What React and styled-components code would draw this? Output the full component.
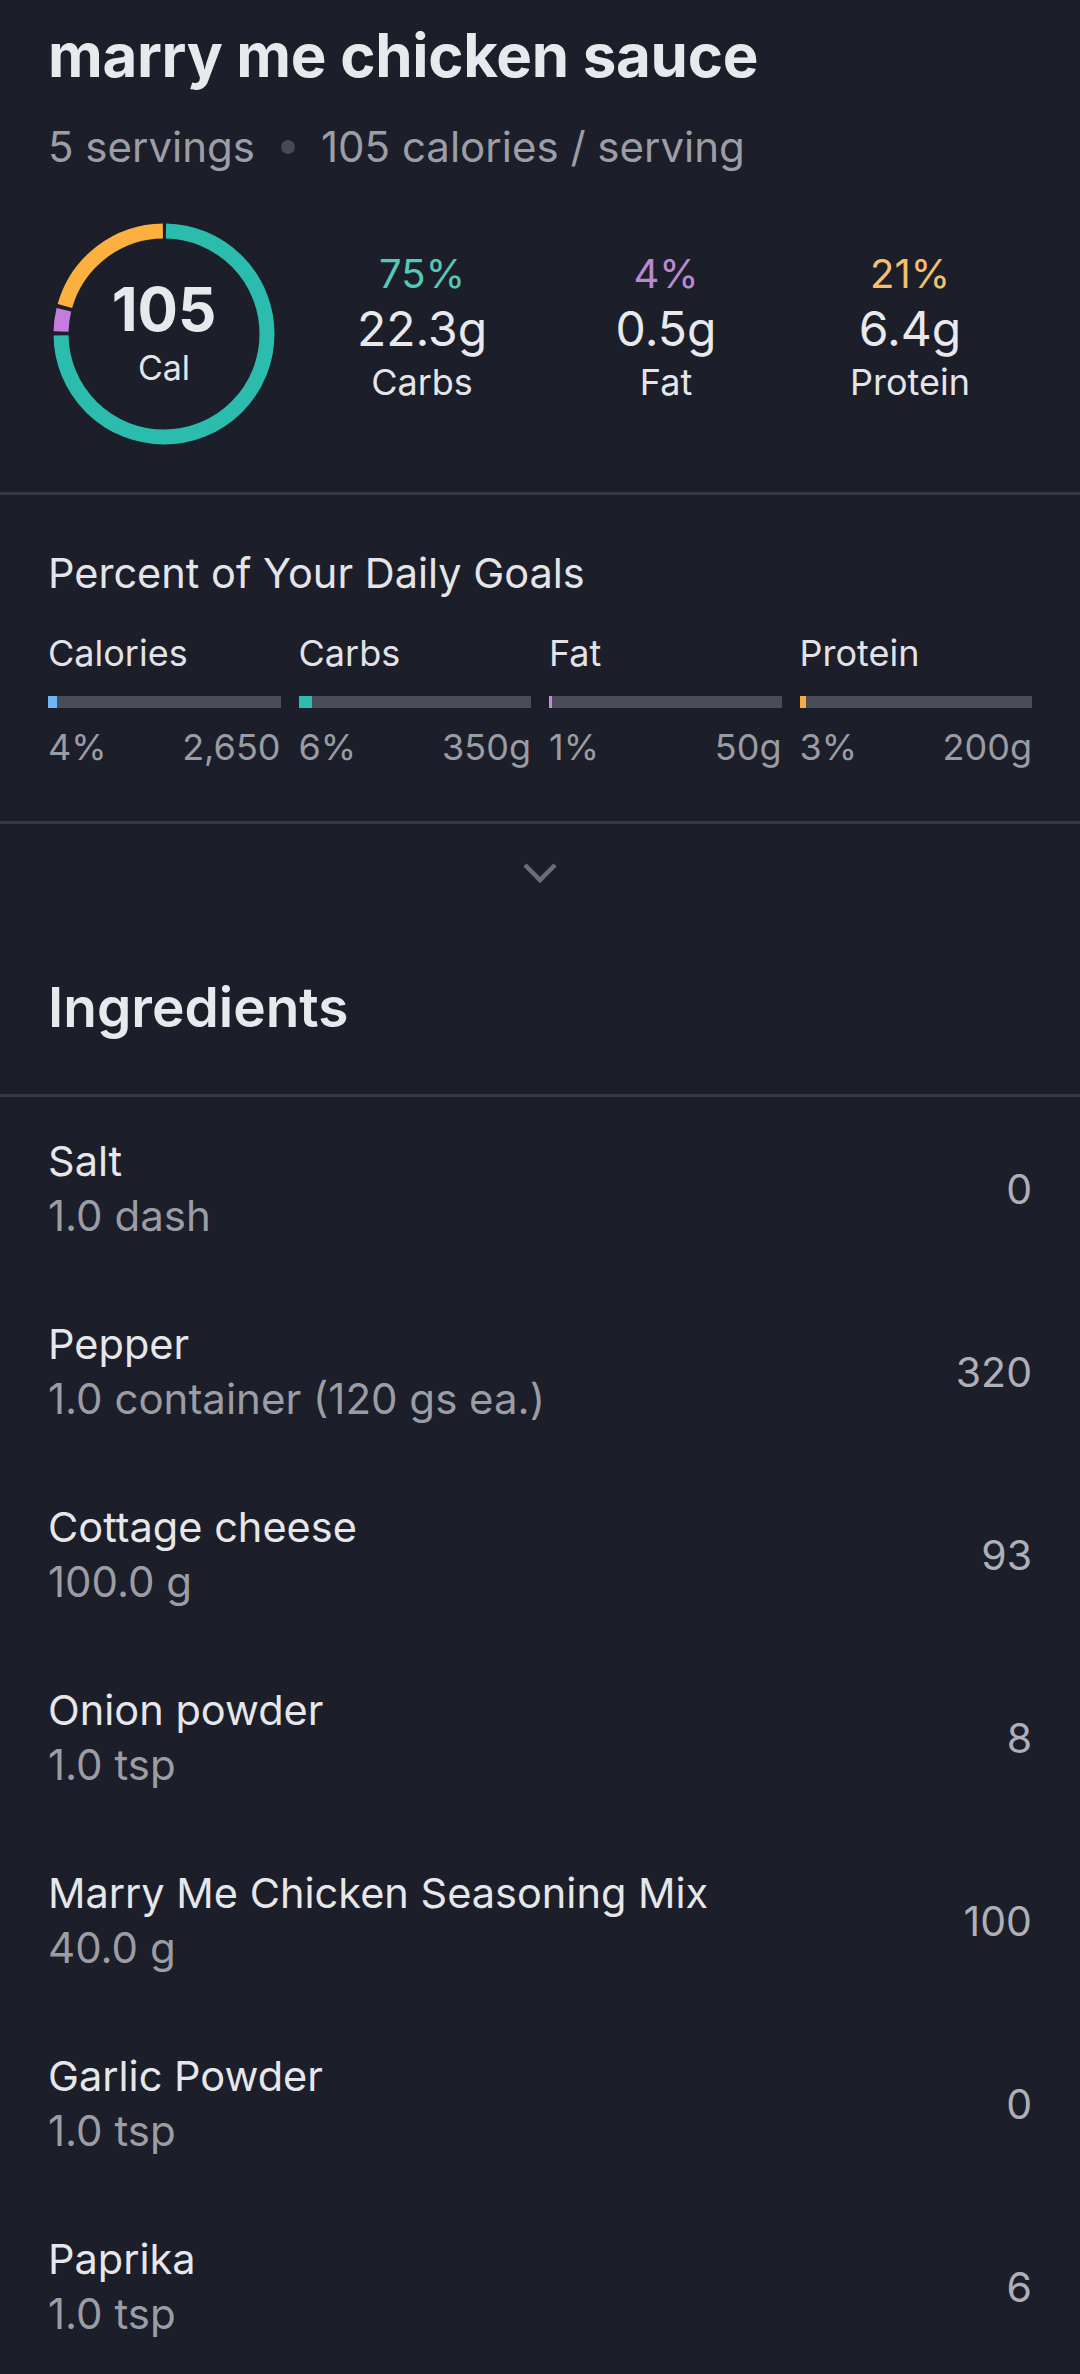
import React from 'react'
import styled, { createGlobalStyle } from 'styled-components'

const GlobalStyle = createGlobalStyle`
  html, body {
    margin: 0;
    padding: 0;
    background: #1c1e29;
  }
  body {
    font-family: Inter, "Noto Sans", sans-serif;
    color: #e6e7ea;
  }
`;

const Page = styled.div`
  width: 1080px;
  min-height: 2374px;
  background: #1c1e29;
  overflow: hidden;
`;

const Header = styled.div`
  padding: 20px 48px 42px;
`;

const Title = styled.h1`
  margin: 0;
  font-size: 60px;
  line-height: 70px;
  font-weight: 700;
  letter-spacing: -0.3px;
  color: #e8e9ec;
`;

const Subtitle = styled.div`
  margin-top: 31px;
  display: flex;
  align-items: center;
  gap: 26px;
  font-size: 42px;
  line-height: 52px;
  color: #9c9ea6;
`;

const Dot = styled.span`
  width: 14px;
  height: 14px;
  border-radius: 50%;
  background: #474a55;
`;

const Summary = styled.div`
  margin-top: 45px;
  display: flex;
  align-items: center;
`;

const RingBox = styled.div`
  position: relative;
  width: 232px;
  height: 232px;
  flex: none;
`;

const RingCenter = styled.div`
  position: absolute;
  inset: 0;
  display: flex;
  flex-direction: column;
  align-items: center;
  justify-content: center;
  gap: 4px;
`;

const RingValue = styled.div`
  font-size: 60px;
  line-height: 64px;
  font-weight: 700;
  color: #e8e9ec;
`;

const RingLabel = styled.div`
  font-size: 34px;
  line-height: 46px;
  color: #e4e5e8;
`;

const Stats = styled.div`
  margin-left: 20px;
  flex: 1;
  display: grid;
  grid-template-columns: repeat(3, 1fr);
  padding-bottom: 14px;
`;

const Stat = styled.div`
  display: flex;
  flex-direction: column;
  align-items: center;
`;

const StatPct = styled.div`
  font-size: 40px;
  line-height: 50px;
  color: ${p => p.color};
`;

const StatValue = styled.div`
  font-size: 48px;
  line-height: 60px;
  color: #e8e9ec;
`;

const StatLabel = styled.div`
  font-size: 36px;
  line-height: 46px;
  color: #e4e5e8;
`;

const Divider = styled.div`
  height: 3px;
  background: #363945;
`;

const Goals = styled.div`
  padding: 54px 48px 52px;
`;

const GoalsTitle = styled.div`
  font-size: 41.5px;
  line-height: 48px;
  color: #e4e5e8;
`;

const GoalsGrid = styled.div`
  margin-top: 34px;
  display: grid;
  grid-template-columns: repeat(4, 1fr);
  column-gap: 18px;
`;

const Goal = styled.div`
  display: flex;
  flex-direction: column;
`;

const GoalLabel = styled.div`
  font-size: 36px;
  line-height: 44px;
  color: #e2e3e7;
`;

const Track = styled.div`
  margin-top: 21px;
  height: 12px;
  background: #4a4c56;
  display: flex;
`;

const Fill = styled.div`
  height: 100%;
  background: ${p => p.color};
`;

const GoalNums = styled.div`
  margin-top: 17px;
  display: flex;
  justify-content: space-between;
  font-size: 36px;
  line-height: 44px;
  color: #9a9ca4;
`;

const Toggle = styled.div`
  display: flex;
  justify-content: center;
  padding-top: 38px;
`;

const SectionHead = styled.h2`
  margin: 0;
  padding: 90px 48px 54px;
  font-size: 55px;
  line-height: 66px;
  font-weight: 600;
  color: #e8e9ec;
`;

const List = styled.div`
  display: flex;
  flex-direction: column;
`;

const Row = styled.div`
  height: 183px;
  box-sizing: border-box;
  padding: 0 48px;
  display: flex;
  align-items: center;
  justify-content: space-between;
  border-radius: 28px;
`;

const RowText = styled.div`
  display: flex;
  flex-direction: column;
`;

const RowName = styled.div`
  font-size: 41.5px;
  line-height: 54px;
  color: #e6e7ea;
`;

const RowQty = styled.div`
  font-size: 42px;
  line-height: 56px;
  color: #9b9da5;
`;

const RowCal = styled.div`
  font-size: 41px;
  line-height: 50px;
  color: #aeb0b7;
`;

const R = 103;
const C = 2 * Math.PI * R;

const Ring = () => {
  const segs = [
    { f: 0.75, color: '#2bbcae' },
    { f: 0.04, color: '#c67bde' },
    { f: 0.21, color: '#fbb03f' },
  ];
  let start = 0;
  const gap = 4;
  return (
    <svg width="232" height="232" viewBox="0 0 232 232">
      <g transform="rotate(-90 116 116)">
        {segs.map((s, i) => {
          const len = s.f * C - gap;
          const el = (
            <circle
              key={i}
              cx="116"
              cy="116"
              r={R}
              fill="none"
              stroke={s.color}
              strokeWidth="15"
              strokeDasharray={`${len} ${C - len}`}
              strokeDashoffset={-(start * C + gap / 2)}
            />
          );
          start += s.f;
          return el;
        })}
      </g>
    </svg>
  );
};

const stats = [
  { pct: '75%', value: '22.3g', label: 'Carbs', color: '#55c8b9' },
  { pct: '4%', value: '0.5g', label: 'Fat', color: '#bb89d1' },
  { pct: '21%', value: '6.4g', label: 'Protein', color: '#f4c06f' },
];

const goals = [
  { label: 'Calories', pct: 4, goal: '2,650', color: '#6fb6f6' },
  { label: 'Carbs', pct: 6, goal: '350g', color: '#2bbcae' },
  { label: 'Fat', pct: 1, goal: '50g', color: '#c58bd6' },
  { label: 'Protein', pct: 3, goal: '200g', color: '#f6ad45' },
];

const ingredients = [
  { name: 'Salt', qty: '1.0 dash', cal: '0' },
  { name: 'Pepper', qty: '1.0 container (120 gs ea.)', cal: '320' },
  { name: 'Cottage cheese', qty: '100.0 g', cal: '93' },
  { name: 'Onion powder', qty: '1.0 tsp', cal: '8' },
  { name: 'Marry Me Chicken Seasoning Mix', qty: '40.0 g', cal: '100' },
  { name: 'Garlic Powder', qty: '1.0 tsp', cal: '0' },
  { name: 'Paprika', qty: '1.0 tsp', cal: '6' },
];

const App = () => {
  return (
    <Page>
      <GlobalStyle />
      <Header>
        <Title>marry me chicken sauce</Title>
        <Subtitle>
          <span>5 servings</span>
          <Dot />
          <span>105 calories / serving</span>
        </Subtitle>
        <Summary>
          <RingBox>
            <Ring />
            <RingCenter>
              <RingValue>105</RingValue>
              <RingLabel>Cal</RingLabel>
            </RingCenter>
          </RingBox>
          <Stats>
            {stats.map(s => (
              <Stat key={s.label}>
                <StatPct color={s.color}>{s.pct}</StatPct>
                <StatValue>{s.value}</StatValue>
                <StatLabel>{s.label}</StatLabel>
              </Stat>
            ))}
          </Stats>
        </Summary>
      </Header>
      <Divider />
      <Goals>
        <GoalsTitle>Percent of Your Daily Goals</GoalsTitle>
        <GoalsGrid>
          {goals.map(g => (
            <Goal key={g.label}>
              <GoalLabel>{g.label}</GoalLabel>
              <Track>
                <Fill color={g.color} style={{ width: `${Math.max(g.pct, 1.3)}%` }} />
              </Track>
              <GoalNums>
                <span>{g.pct}%</span>
                <span>{g.goal}</span>
              </GoalNums>
            </Goal>
          ))}
        </GoalsGrid>
      </Goals>
      <Divider />
      <Toggle>
        <svg width="36" height="22" viewBox="0 0 36 22">
          <path d="M3 3 L18 18 L33 3" fill="none" stroke="#6b6e79" strokeWidth="4.5" />
        </svg>
      </Toggle>
      <SectionHead>Ingredients</SectionHead>
      <Divider />
      <List>
        {ingredients.map(i => (
          <Row key={i.name}>
            <RowText>
              <RowName>{i.name}</RowName>
              <RowQty>{i.qty}</RowQty>
            </RowText>
            <RowCal>{i.cal}</RowCal>
          </Row>
        ))}
      </List>
    </Page>
  )
}

export default App
